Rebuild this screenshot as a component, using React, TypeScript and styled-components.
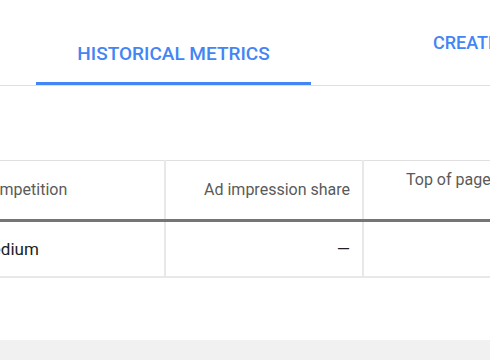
import styled, { createGlobalStyle } from "styled-components";

const GlobalStyle = createGlobalStyle`
    body {
        margin: 0;
        background: #f1f1f1;
        font-family: Roboto, "Noto Sans", Arial, sans-serif;
    }
`;

const Card = styled.div`
    background: #ffffff;
    height: 340px;
    overflow: hidden;
    box-shadow: 0 2px 3px rgba(0, 0, 0, 0.3);
`;

const TabBar = styled.div`
    display: flex;
    height: 85px;
    padding-left: 36px;
    border-bottom: 1px solid #e0e0e0;
`;

const Tab = styled.div<{ active?: boolean }>`
    box-sizing: border-box;
    flex: none;
    width: ${(props) => (props.active ? "275px" : "auto")};
    display: flex;
    justify-content: ${(props) => (props.active ? "center" : "flex-start")};
    align-items: ${(props) => (props.active ? "flex-end" : "flex-start")};
    padding: ${(props) => (props.active ? "0 0 17px" : "32px 0 0 122px")};
    border-bottom: 3px solid ${(props) => (props.active ? "#4285f4" : "transparent")};
    color: #4285f4;
    font-size: ${(props) => (props.active ? "19px" : "18px")};
    font-weight: 500;
    line-height: 22px;
    white-space: nowrap;
`;

const TableArea = styled.div`
    margin-top: 74px;
    overflow: hidden;
`;

const Table = styled.table`
    width: 760px;
    margin-left: -34px;
    border-collapse: collapse;
    table-layout: fixed;
    font-size: 16px;
`;

const HeadCell = styled.th<{ align?: string; w: number }>`
    width: ${(props) => props.w}px;
    height: 60px;
    padding: 0 12px;
    box-sizing: border-box;
    text-align: ${(props) => props.align || "left"};
    vertical-align: middle;
    font-weight: 400;
    color: #5a5a5a;
    line-height: 20px;
    border-top: 1px solid #e0e0e0;
    border-left: 2px solid #e8e8e8;
    border-bottom: 3px solid #757575;
`;

const Cell = styled.td<{ align?: string }>`
    height: 54px;
    padding: ${(props) => (props.align === "right" ? "0 12px" : "0 12px 0 9px")};
    text-align: ${(props) => props.align || "left"};
    font-size: 17px;
    color: #212121;
    border-left: 2px solid #e8e8e8;
    border-bottom: 2px solid #e8e8e8;
`;

function App() {
    return (
        <>
            <GlobalStyle />
            <Card>
                <TabBar>
                    <Tab active>HISTORICAL METRICS</Tab>
                    <Tab>CREATE PLAN</Tab>
                </TabBar>
                <TableArea>
                    <Table>
                        <thead>
                            <tr>
                                <HeadCell w={198}>Competition</HeadCell>
                                <HeadCell w={198} align="right">
                                    Ad impression share
                                </HeadCell>
                                <HeadCell w={201} align="right">
                                    Top of page bid (low range)
                                </HeadCell>
                                <HeadCell w={163} align="right">
                                    Top of page bid (high range)
                                </HeadCell>
                            </tr>
                        </thead>
                        <tbody>
                            <tr>
                                <Cell>Medium</Cell>
                                <Cell align="right">—</Cell>
                                <Cell align="right"></Cell>
                                <Cell align="right"></Cell>
                            </tr>
                        </tbody>
                    </Table>
                </TableArea>
            </Card>
        </>
    );
}

export default App;
